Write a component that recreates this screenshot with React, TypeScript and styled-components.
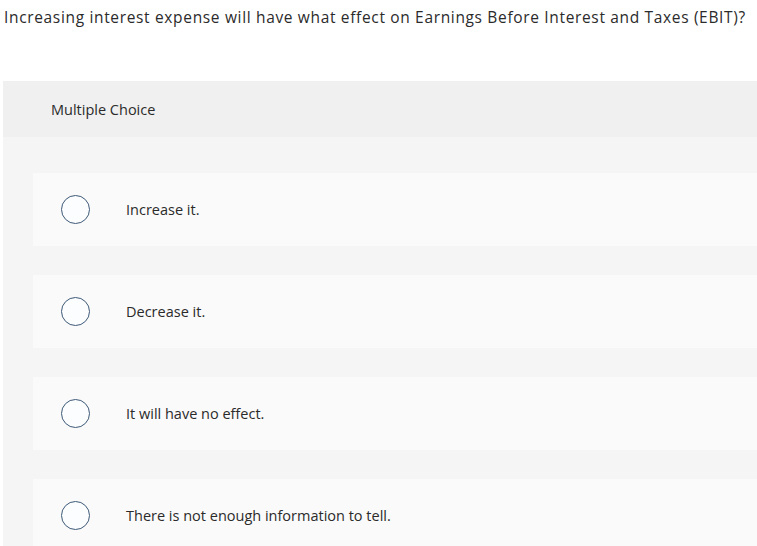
import React from 'react';
import styled, { createGlobalStyle } from 'styled-components';

const GlobalStyle = createGlobalStyle`
  html, body {
    margin: 0;
    padding: 0;
    background: #ffffff;
  }
  body {
    font-family: "Open Sans", "Liberation Sans", Arial, sans-serif;
    color: #333333;
  }
`;

const Page = styled.div`
  width: 757px;
  height: 546px;
  overflow: hidden;
`;

const Question = styled.p`
  margin: 0;
  padding: 6px 0 0 4px;
  height: 81px;
  box-sizing: border-box;
  font-size: 15.5px;
  line-height: 22px;
  letter-spacing: 0.66px;
  color: #2b2b2b;
  white-space: nowrap;
`;

const Panel = styled.section`
  margin-left: 3px;
  background: #f5f5f5;
`;

const PanelHeader = styled.div`
  height: 56px;
  background: #f0f0f0;
  display: flex;
  align-items: center;
  padding-left: 48px;
  font-size: 14.5px;
  color: #2b2b2b;
`;

const Options = styled.div`
  display: flex;
  flex-direction: column;
  gap: 29px;
  padding: 36px 0 0 30px;
`;

const Option = styled.label`
  height: 73px;
  background: #fafafa;
  display: flex;
  align-items: center;
  padding-left: 28px;
  font-size: 14.5px;
  color: #2b2b2b;
  cursor: pointer;
`;

const Radio = styled.span`
  width: 27px;
  height: 27px;
  border: 1.6px solid #3e5977;
  border-radius: 50%;
  background: #fbfdff;
  flex: none;
  margin-right: 36px;
`;

const choices = [
  'Increase it.',
  'Decrease it.',
  'It will have no effect.',
  'There is not enough information to tell.',
];

export default function App() {
  return (
    <Page>
      <GlobalStyle />
      <Question>
        Increasing interest expense will have what effect on Earnings Before Interest and Taxes (EBIT)?
      </Question>
      <Panel>
        <PanelHeader>Multiple Choice</PanelHeader>
        <Options>
          {choices.map((c) => (
            <Option key={c}>
              <Radio />
              {c}
            </Option>
          ))}
        </Options>
      </Panel>
    </Page>
  );
}
